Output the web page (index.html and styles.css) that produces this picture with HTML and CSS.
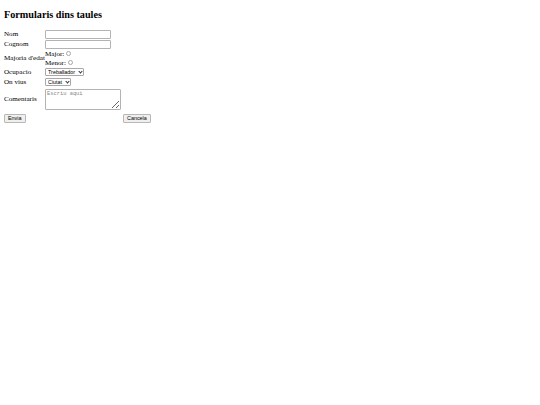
FILE: index.html
```html
<!DOCTYPE html>
<html lang="ca">
<head>
    <meta charset="UTF-8">
    <title>Formularis dins taules</title>
    <link rel="stylesheet" href="styles.css">
</head>
<body>

<h2>Formularis dins taules</h2>

<form>
    <table class="form-table">
        <tr>
            <td class="label">Nom</td>
            <td><input class="text-input" type="text" name="nom"></td>
        </tr>
        <tr>
            <td class="label">Cognom</td>
            <td><input class="text-input" type="text" name="cognom"></td>
        </tr>
        <tr>
            <td class="label">Majoria d'edat</td>
            <td class="radios">
                Major: <input class="radio" type="radio" name="edat" value="major"><br>
                Menor: <input class="radio" type="radio" name="edat" value="menor">
            </td>
        </tr>
        <tr>
            <td class="label">Ocupacio</td>
            <td>
                <span class="select-wrap">
                    <select class="select" name="ocupacio">
                        <option>Treballador</option>
                        <option>Estudiant</option>
                    </select>
                </span>
            </td>
        </tr>
        <tr>
            <td class="label">On vius</td>
            <td>
                <span class="select-wrap">
                    <select class="select" name="lloc">
                        <option>Ciutat</option>
                        <option>Poble</option>
                    </select>
                </span>
            </td>
        </tr>
        <tr>
            <td class="label">Comentaris</td>
            <td><textarea class="comments" name="comentaris" placeholder="Escriu aqui"></textarea></td>
        </tr>
        <tr>
            <td class="label"><button class="btn" type="submit">Envia</button></td>
            <td></td>
            <td class="last"><button class="btn" type="reset">Cancela</button></td>
        </tr>
    </table>
</form>

</body>
</html>
```

FILE: styles.css
```css
body {
    font-family: "Liberation Serif", serif;
    font-size: 7.1px;
    margin: 4px;
    color: #000;
}

h2 {
    font-size: 10.2px;
    line-height: 12px;
    margin: 5px 0 8px;
}

.form-table {
    border-collapse: separate;
    border-spacing: 0 1px;
}

.form-table td {
    padding: 0;
    vertical-align: middle;
    line-height: 9px;
}

.label {
    width: 41px;
    white-space: nowrap;
}

.last {
    padding-left: 2px !important;
}

.text-input {
    display: block;
    box-sizing: border-box;
    width: 66px;
    height: 9px;
    margin: 0;
    padding: 0;
    border: 1px solid #b3b3b3;
    border-radius: 1px;
}

.form-table .radios {
    line-height: 8.5px;
}

.radio {
    appearance: none;
    box-sizing: border-box;
    width: 5px;
    height: 5px;
    margin: 0;
    border: 1px solid #a8a8a8;
    border-radius: 50%;
    vertical-align: 0;
}

.select-wrap {
    position: relative;
    display: inline-block;
    vertical-align: top;
}

.select {
    appearance: none;
    display: block;
    box-sizing: border-box;
    height: 8px;
    margin: 0;
    padding: 0 7px 0 2px;
    border: 1px solid #a8a8a8;
    border-radius: 1px;
    background: #fff;
    font-family: "Liberation Sans", sans-serif;
    font-size: 5.4px;
    line-height: 6px;
    color: #000;
}

.select-wrap::after {
    content: "";
    position: absolute;
    right: 2px;
    top: 2px;
    width: 2px;
    height: 2px;
    border-right: 1px solid #333;
    border-bottom: 1px solid #333;
    transform: rotate(45deg);
}

.comments {
    display: block;
    box-sizing: border-box;
    width: 76px;
    height: 21px;
    margin: 1px 0 0;
    padding: 1px 1px;
    border: 1px solid #b3b3b3;
    border-radius: 1px;
    font-family: "Liberation Mono", monospace;
    font-size: 5.4px;
    line-height: 6px;
}

.comments::placeholder {
    color: #888;
}

.btn {
    display: block;
    box-sizing: border-box;
    height: 9px;
    margin: 3px 0 0;
    padding: 0 3px;
    border: 1px solid #b8b8b8;
    border-radius: 1px;
    background: #efefef;
    font-family: "Liberation Sans", sans-serif;
    font-size: 5.4px;
    line-height: 7px;
    color: #000;
}
```
